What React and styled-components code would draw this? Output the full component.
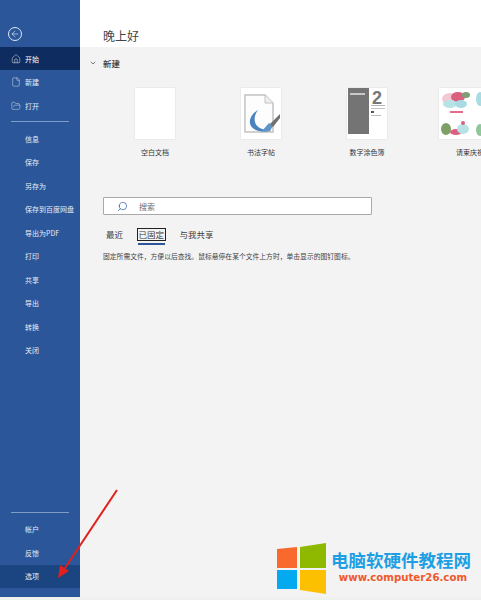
import React from 'react';
import styled, { createGlobalStyle } from 'styled-components';
import { ArrowLeft, ChevronDown, File, FolderOpen, House, Search } from 'lucide-react';

const GlobalStyle = createGlobalStyle`
    html, body {
        margin: 0;
        padding: 0;
        background: #f3f3f3;
    }
    body {
        font-family: "Noto Sans CJK SC", "Noto Sans", sans-serif;
    }
`;

const Page = styled.div`
    position: relative;
    display: flex;
    box-sizing: border-box;
    width: 481px;
    height: 600px;
    overflow: hidden;
    background: #f3f3f3;
    border-bottom: 3px solid #eef1ee;
`;

const Sidebar = styled.nav`
    display: flex;
    flex-direction: column;
    flex: none;
    box-sizing: border-box;
    width: 80px;
    padding-bottom: 9px;
    background: #2b579a;
    color: #e6ecf5;
`;

const BackButton = styled.div`
    display: flex;
    align-items: center;
    justify-content: center;
    flex: none;
    box-sizing: border-box;
    width: 14px;
    height: 14px;
    margin: 27px 0 6px 8px;
    border: 1px solid #dfe7f2;
    border-radius: 50%;
`;

const NavItem = styled.div`
    display: flex;
    align-items: center;
    gap: 4px;
    flex: none;
    height: 23.45px;
    padding-left: ${p => (p.$icon ? '11px' : '25px')};
    font-size: 7px;
    white-space: nowrap;
    background: ${p => (p.$active ? '#0e2c5f' : p.$hover ? '#1a4580' : 'transparent')};
    color: ${p => (p.$active ? '#ffffff' : '#e6ecf5')};
`;

const NavDivider = styled.div`
    flex: none;
    height: 1px;
    margin: 4px 11px 5px;
    background: #7f9cc7;
`;

const Spacer = styled.div`
    flex: 1;
`;

const Main = styled.main`
    flex: 1;
    min-width: 0;
`;

const Header = styled.header`
    display: flex;
    align-items: center;
    box-sizing: border-box;
    height: 47px;
    padding: 23px 0 0 23px;
    background: #ffffff;
    color: #444444;
    font-size: 12px;
`;

const SectionTitle = styled.div`
    display: flex;
    align-items: center;
    gap: 6px;
    height: 16px;
    margin: 8px 0 0 9px;
    font-size: 8.5px;
    font-weight: 500;
    color: #3a3a3a;
`;

const Templates = styled.div`
    display: flex;
    margin: 17px 0 0 55px;
`;

const Template = styled.div`
    flex: none;
    margin-right: ${p => p.$gap}px;
    width: 40px;
`;

const Thumb = styled.div`
    display: flex;
    width: ${p => p.$width || 40}px;
    height: 51px;
    background: #ffffff;
    box-shadow: 0 0 1px rgba(0, 0, 0, 0.2);
`;

const Caption = styled.div`
    width: ${p => p.$width || 40}px;
    margin-top: 8px;
    font-size: 7px;
    line-height: 10px;
    color: #333333;
    text-align: center;
    white-space: nowrap;
`;

const SearchBox = styled.div`
    display: flex;
    align-items: center;
    box-sizing: border-box;
    width: 269px;
    height: 18px;
    margin: 40px 0 0 23px;
    padding-left: 13px;
    gap: 11px;
    border: 1px solid #a9a9a9;
    border-radius: 1px;
    background: #ffffff;
    color: #6d6d6d;
    font-size: 8px;
`;

const SearchIcon = styled(Search)`
    transform: scaleX(-1);
    color: #2b579a;
`;

const Tabs = styled.div`
    display: flex;
    align-items: flex-start;
    gap: 11.5px;
    margin: 13px 0 0 24px;
`;

const Tab = styled.div`
    position: relative;
    box-sizing: border-box;
    height: 13px;
    padding: 0 1px;
    font-size: 8.5px;
    line-height: 11px;
    color: #3d3d3d;
    border: 1px solid ${p => (p.$active ? '#222222' : 'transparent')};

    &::after {
        content: '';
        display: ${p => (p.$active ? 'block' : 'none')};
        position: absolute;
        left: 0;
        right: 0;
        bottom: -5px;
        height: 2px;
        background: #2b579a;
    }
`;

const Hint = styled.p`
    margin: 10px 0 0 23px;
    font-size: 6.8px;
    line-height: 10px;
    color: #444444;
    white-space: nowrap;
`;

const RedArrow = styled.svg`
    position: absolute;
    left: 0;
    top: 0;
    pointer-events: none;
`;

const Watermark = styled.div`
    position: absolute;
    left: 277px;
    top: 543px;
    display: flex;
    gap: 6px;
`;

const WatermarkText = styled.div`
    display: flex;
    flex-direction: column;
    align-items: flex-end;
    padding-top: 7px;
    width: 140px;
    margin-left: -1px;
`;

const WatermarkTitle = styled.div`
    font-size: 17.5px;
    line-height: 20px;
    font-weight: 700;
    color: #1f9fe3;
    white-space: nowrap;
`;

const WatermarkUrl = styled.div`
    margin-top: 1px;
    margin-right: 4px;
    font-family: "DejaVu Sans", sans-serif;
    font-size: 10.2px;
    line-height: 14px;
    font-weight: 700;
    color: #f0592b;
    white-space: nowrap;
`;

const topItems = ['信息', '保存', '另存为', '保存到百度网盘', '导出为PDF', '打印', '共享', '导出', '转换', '关闭'];

const CalligraphyIcon = () => (
    <svg width="40" height="51" viewBox="0 0 40 51">
        <path d="M4 7H24L32 15V44H4Z" fill="#fdfdfd" stroke="#c2c2c2" strokeWidth="1.5" />
        <path d="M24 7V15H32" fill="#efefef" stroke="#c2c2c2" />
        <path d="M17 22C10 26 7 33 10 38C13 43 22 45 30 43C23 42 15 40 14 34C13 30 14 26 17 22Z" fill="#4b84bd" />
        <path d="M21 43L28 35L32 38L29 43Z" fill="#5f94c8" />
        <path d="M29 36L39 26V30L32 39Z" fill="#707070" />
    </svg>
);

const ColoringIcon = () => (
    <svg width="40" height="51" viewBox="0 0 40 51">
        <rect x="1" y="0" width="21" height="46" fill="#747474" />
        <rect x="3" y="5" width="15" height="2" fill="#c9c9c9" />
        <text x="25" y="16" fontSize="18" fontWeight="700" fill="#777777" fontFamily="Liberation Sans, sans-serif">2</text>
        <rect x="24" y="17" width="14" height="1" fill="#b5b5b5" />
        <rect x="24" y="20" width="14" height="1" fill="#c5c5c5" />
        <rect x="24" y="23" width="3" height="2" fill="#555555" />
        <rect x="24" y="27" width="10" height="1" fill="#bbbbbb" />
    </svg>
);

const InvitationIcon = () => (
    <svg width="62" height="51" viewBox="0 0 62 51">
        <ellipse cx="11" cy="11" rx="8" ry="6" fill="#f2c9d2" />
        <ellipse cx="19" cy="9" rx="7" ry="5" fill="#d9607f" />
        <ellipse cx="27" cy="7" rx="4" ry="3" fill="#7d9f73" />
        <ellipse cx="11" cy="16" rx="7" ry="4" fill="#b7e2e6" />
        <ellipse cx="22" cy="16" rx="6" ry="4" fill="#a9dbe3" />
        <rect x="11" y="23" width="13" height="2" fill="#e76a8c" />
        <ellipse cx="7" cy="41" rx="5" ry="6" fill="#7f9f66" />
        <ellipse cx="17" cy="44" rx="6" ry="3" fill="#d9607f" />
        <ellipse cx="24" cy="41" rx="6" ry="5" fill="#b7e2e6" />
        <circle cx="24" cy="35" r="2" fill="#d9607f" />
        <ellipse cx="41" cy="11" rx="4" ry="7" fill="#a9dbe3" />
        <ellipse cx="41" cy="42" rx="4" ry="6" fill="#8fc79a" />
    </svg>
);

const WindowsFlag = () => (
    <svg width="49" height="51" viewBox="0 0 49 51">
        <path d="M0 6L20 4V25H0Z" fill="#f9682d" />
        <path d="M23 4L49 0V25H23Z" fill="#8fb800" />
        <path d="M0 27H20V46H0Z" fill="#04a9ef" />
        <path d="M23 27H49V51L23 47Z" fill="#fdc000" />
    </svg>
);

const App = () => (
    <Page>
        <GlobalStyle />
        <Sidebar>
            <BackButton>
                <ArrowLeft size={10} strokeWidth={1.5} />
            </BackButton>
            <NavItem $icon $active><House size={10} strokeWidth={1.1} />开始</NavItem>
            <NavItem $icon><File size={10} strokeWidth={1.1} />新建</NavItem>
            <NavItem $icon><FolderOpen size={10} strokeWidth={1.1} />打开</NavItem>
            <NavDivider />
            {topItems.map(item => <NavItem key={item}>{item}</NavItem>)}
            <Spacer />
            <NavDivider />
            <NavItem>帐户</NavItem>
            <NavItem>反馈</NavItem>
            <NavItem $hover>选项</NavItem>
        </Sidebar>
        <Main>
            <Header>晚上好</Header>
            <SectionTitle><ChevronDown size={8} />新建</SectionTitle>
            <Templates>
                <Template $gap={66}>
                    <Thumb />
                    <Caption>空白文档</Caption>
                </Template>
                <Template $gap={66}>
                    <Thumb><CalligraphyIcon /></Thumb>
                    <Caption>书法字帖</Caption>
                </Template>
                <Template $gap={52}>
                    <Thumb><ColoringIcon /></Thumb>
                    <Caption>数字涂色簿</Caption>
                </Template>
                <Template $gap={0}>
                    <Thumb $width={62}><InvitationIcon /></Thumb>
                    <Caption $width={62}>请柬庆祝</Caption>
                </Template>
            </Templates>
            <SearchBox>
                <SearchIcon size={11} strokeWidth={1.5} />
                搜索
            </SearchBox>
            <Tabs>
                <Tab>最近</Tab>
                <Tab $active>已固定</Tab>
                <Tab>与我共享</Tab>
            </Tabs>
            <Hint>固定所需文件，方便以后查找。鼠标悬停在某个文件上方时，单击显示的图钉图标。</Hint>
        </Main>
        <RedArrow width="481" height="600" viewBox="0 0 481 600">
            <path d="M117 490L63 571" stroke="#e0201c" strokeWidth="2" fill="none" />
            <path d="M58 578L60 565L69 571Z" fill="#e0201c" />
        </RedArrow>
        <Watermark>
            <WindowsFlag />
            <WatermarkText>
                <WatermarkTitle>电脑软硬件教程网</WatermarkTitle>
                <WatermarkUrl>www.computer26.com</WatermarkUrl>
            </WatermarkText>
        </Watermark>
    </Page>
);

export default App;
